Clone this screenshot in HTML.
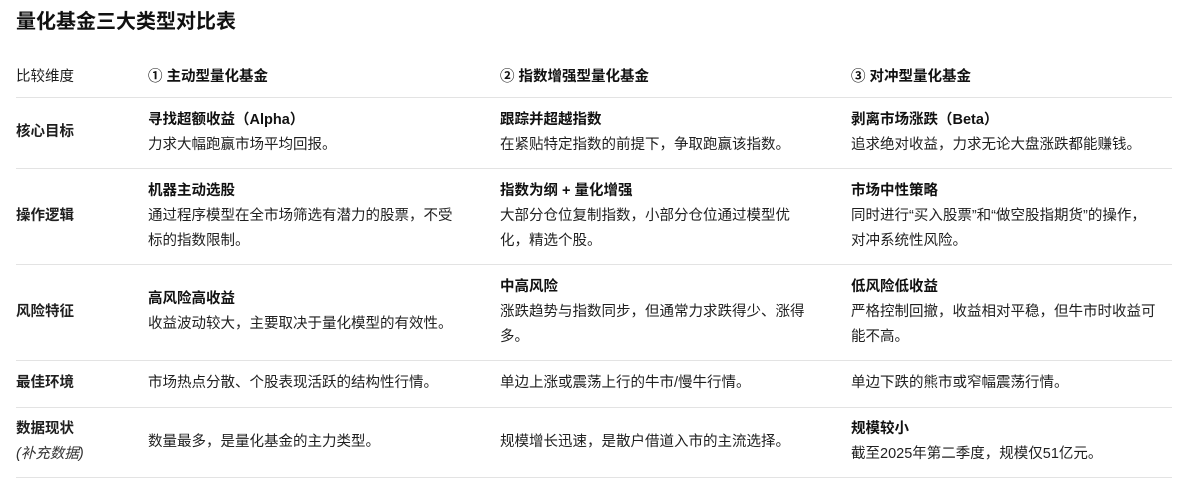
<!DOCTYPE html>
<html><head><meta charset="utf-8"><style>
body{margin:0;background:#fff;width:1194px;height:490px;overflow:hidden;font-family:"Liberation Sans","Noto Sans CJK SC",sans-serif;color:#1f1f1f;font-size:14.5px}
h1{position:absolute;left:16px;top:8px;margin:0;font-size:20px;font-weight:bold;line-height:28px;color:#111}
.row{position:absolute;left:16px;width:1156px;display:flex;border-bottom:1px solid #e3e3e3;box-sizing:border-box}
.c{display:flex;flex-direction:column;justify-content:center;line-height:25px;white-space:nowrap}
.c0{width:132px;font-weight:bold}
.c1{width:352px}
.c2{width:351px}
.c3{width:321px}
b{font-weight:bold;color:#111}
i{font-weight:normal;font-style:italic;color:#333}
</style></head><body>
<h1>量化基金三大类型对比表</h1>
<div class="row" style="top:58px;height:40px"><div class="c c0" style="font-weight:normal">比较维度</div><div class="c c1"><b>① 主动型量化基金</b></div><div class="c c2"><b>② 指数增强型量化基金</b></div><div class="c c3"><b>③ 对冲型量化基金</b></div></div>
<div class="row" style="top:97px;height:72px"><div class="c c0">核心目标</div><div class="c c1"><b>寻找超额收益（Alpha）</b><span>力求大幅跑赢市场平均回报。</span></div><div class="c c2"><b>跟踪并超越指数</b><span>在紧贴特定指数的前提下，争取跑赢该指数。</span></div><div class="c c3"><b>剥离市场涨跌（Beta）</b><span>追求绝对收益，力求无论大盘涨跌都能赚钱。</span></div></div>
<div class="row" style="top:168px;height:97px"><div class="c c0">操作逻辑</div><div class="c c1"><b>机器主动选股</b><span>通过程序模型在全市场筛选有潜力的股票，不受</span><span>标的指数限制。</span></div><div class="c c2"><b>指数为纲 + 量化增强</b><span>大部分仓位复制指数，小部分仓位通过模型优</span><span>化，精选个股。</span></div><div class="c c3"><b>市场中性策略</b><span>同时进行“买入股票”和“做空股指期货”的操作，</span><span>对冲系统性风险。</span></div></div>
<div class="row" style="top:264px;height:97px"><div class="c c0">风险特征</div><div class="c c1"><b>高风险高收益</b><span>收益波动较大，主要取决于量化模型的有效性。</span></div><div class="c c2"><b>中高风险</b><span>涨跌趋势与指数同步，但通常力求跌得少、涨得</span><span>多。</span></div><div class="c c3"><b>低风险低收益</b><span>严格控制回撤，收益相对平稳，但牛市时收益可</span><span>能不高。</span></div></div>
<div class="row" style="top:360px;height:48px"><div class="c c0">最佳环境</div><div class="c c1">市场热点分散、个股表现活跃的结构性行情。</div><div class="c c2">单边上涨或震荡上行的牛市/慢牛行情。</div><div class="c c3">单边下跌的熊市或窄幅震荡行情。</div></div>
<div class="row" style="top:407px;height:71px"><div class="c c0"><span>数据现状</span><i>(补充数据)</i></div><div class="c c1">数量最多，是量化基金的主力类型。</div><div class="c c2">规模增长迅速，是散户借道入市的主流选择。</div><div class="c c3"><b>规模较小</b><span>截至2025年第二季度，规模仅51亿元。</span></div></div>
</body></html>
